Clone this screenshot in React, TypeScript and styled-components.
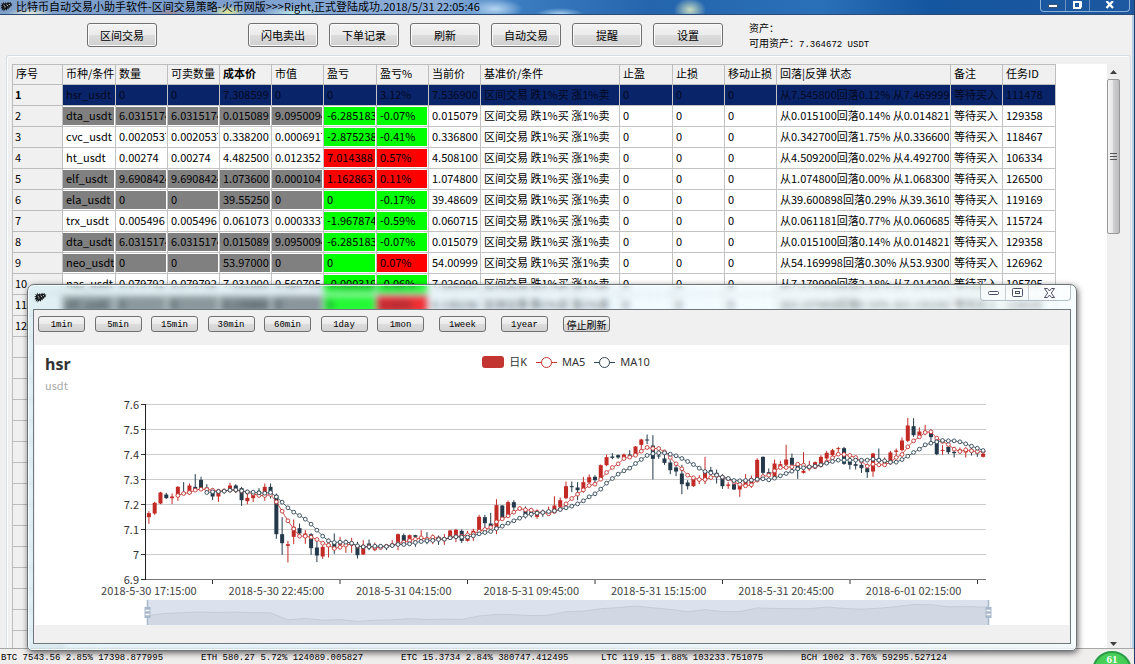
import React from "react";
import styled, { createGlobalStyle } from "styled-components";

const GlobalStyle = createGlobalStyle`
  * { box-sizing: border-box; }
  html, body { margin: 0; padding: 0; overflow: hidden; }
  body, button {
    font-family: "Noto Sans CJK SC", "Noto Sans", sans-serif;
    font-size: 11px;
    color: #000;
  }
`;

const mono = `"Liberation Mono", "Noto Sans CJK SC", monospace`;

/* ---------- main window ---------- */

const MainWindow = styled.div`
  position: relative;
  display: flex;
  flex-direction: column;
  height: 100vh;
  overflow: hidden;
  background: #f0f0f0;
  border-right: 1px solid #1c3c66;
  box-shadow: inset -2px 0 0 #b6cfe8;
`;

const TitleBar = styled.header`
  display: flex;
  align-items: flex-start;
  justify-content: space-between;
  flex: none;
  height: 15px;
  padding-right: 4px;
  border-bottom: 1px solid #2c4a73;
  background:
    radial-gradient(ellipse 16px 12px at 690px 10px, #c9dcc0, transparent),
    radial-gradient(ellipse 28px 10px at 495px 9px, #b5d6f2, transparent),
    radial-gradient(ellipse 24px 6px at 560px 14px, #a4cdec, transparent),
    radial-gradient(ellipse 24px 6px at 30px 14px, #eef3da, transparent),
    radial-gradient(ellipse 14px 6px at 170px 14px, #a28791, transparent),
    radial-gradient(ellipse 18px 7px at 228px 12px, #e2ec9c, transparent),
    radial-gradient(ellipse 32px 8px at 295px 14px, #c3eeea, transparent),
    linear-gradient(90deg, #7fa0cb 0, #7d9fce 250px, #8db0da 440px, #3b7cc0 520px, #2465ad 650px, #2a70b8 820px, #14569f 930px, #1d58a0 100%);
`;

const TitleText = styled.h1`
  display: flex;
  gap: 3px;
  margin: 0;
  font-size: 11px;
  font-weight: 400;
  line-height: 12px;
  white-space: nowrap;
`;

const WindowControls = styled.div`
  display: flex;
  height: 12px;
  border: 1px solid #8fb0d6;
  border-top: 0;
  border-radius: 0 0 4px 4px;
`;

const WindowControl = styled.button<{ $width: number }>`
  display: flex;
  align-items: center;
  justify-content: center;
  width: ${(p) => p.$width}px;
  padding: 0;
  border: 0;
  border-right: 1px solid #6d93c2;
  background: transparent;
  &:last-child { border-right: 0; }
`;

const Toolbar = styled.div`
  display: flex;
  align-items: center;
  flex: none;
  height: 40px;
  padding-left: 87px;
`;

const ToolGroup = styled.div`
  display: flex;
  gap: 11px;
  margin-left: 91px;
`;

const ToolButton = styled.button`
  width: 70px;
  height: 24px;
  padding: 0;
  border: 1px solid #707070;
  border-radius: 3px;
  background: linear-gradient(#f3f3f3, #ebebeb 50%, #dddddd 50%, #cfcfcf);
  box-shadow: inset 0 0 0 1px #fafafa;
  line-height: 20px;
`;

const Assets = styled.dl`
  margin: 2px 0 0 26px;
  font-size: 10px;
  line-height: 15px;
  div { display: flex; align-items: baseline; }
  dt, dd { margin: 0; white-space: nowrap; }
  dd { font-family: ${mono}; font-size: 9px; }
`;

const TablePanel = styled.main`
  display: flex;
  flex: 1;
  min-height: 0;
  margin: 0 3px 0 6px;
  padding: 8px 10px 0 5px;
  border: 1px solid #d5dfe5;
  border-bottom: 0;
  border-radius: 3px 3px 0 0;
  box-shadow: inset 1px 1px 0 #fff;
`;

const TableViewport = styled.div`
  flex: 1;
  min-width: 0;
  overflow: hidden;
  background: #fff;
`;

const TaskTable = styled.table`
  width: 1044px;
  table-layout: fixed;
  border-collapse: separate;
  border-spacing: 0;
  border-top: 1px solid #bdbdbd;
  border-left: 1px solid #bdbdbd;
`;

const HeadCell = styled.th<{ $strong?: boolean }>`
  height: 20px;
  padding: 0 0 2px 3px;
  overflow: hidden;
  border-right: 1px solid #bdbdbd;
  border-bottom: 1px solid #bdbdbd;
  background: #f0f0f0;
  font-weight: ${(p) => (p.$strong ? 700 : 400)};
  line-height: 17px;
  text-align: left;
  white-space: nowrap;
`;

const RowNumber = styled.th<{ $current?: boolean }>`
  height: 21px;
  padding: 0 0 2px 2px;
  border-right: 1px solid #bdbdbd;
  border-bottom: 1px solid #bdbdbd;
  background: #f0f0f0;
  font-weight: ${(p) => (p.$current ? 700 : 400)};
  line-height: 18px;
  text-align: left;
`;

const fills = {
  none: "#ffffff",
  gray: "#808080",
  up: "#ff0000",
  down: "#00ff00",
  selected: "#0a246a",
};
type Fill = keyof typeof fills;

const Cell = styled.td<{ $fill: Fill }>`
  height: 21px;
  padding: 1px 1px 1px 0;
  border-right: 1px solid #c3c3c3;
  border-bottom: 1px solid #c3c3c3;
  background: ${(p) => (p.$fill === "selected" ? fills.selected : "#fff")};
  color: ${(p) => (p.$fill === "selected" ? "#02081c" : "#000")};
`;

const CellText = styled.div<{ $fill: Fill }>`
  height: 18px;
  padding-left: 3px;
  overflow: hidden;
  background: ${(p) => fills[p.$fill]};
  line-height: 17px;
  white-space: nowrap;
`;

const ScrollTrack = styled.div`
  display: flex;
  flex-direction: column;
  flex: none;
  width: 13px;
  background: #efefef;
`;

const ScrollArrow = styled.button`
  display: flex;
  align-items: center;
  justify-content: center;
  height: 15px;
  padding: 0;
  border: 0;
  background: transparent;
  &:last-child { height: 9px; margin-top: auto; }
`;

const ScrollThumb = styled.div`
  display: flex;
  align-items: center;
  justify-content: center;
  height: 155px;
  border: 1px solid #979797;
  border-radius: 2px;
  background: linear-gradient(90deg, #f5f5f5, #e6e6e8 45%, #cfcfd2 50%, #bcbcc0);
`;

const StatusBar = styled.footer`
  display: grid;
  grid-template-columns: repeat(5, 200px);
  flex: none;
  height: 16px;
  padding-left: 1px;
  border-top: 1px solid #a7a7a7;
  background: #f0eded;
  font-family: ${mono};
  font-size: 9px;
  line-height: 18px;
  white-space: nowrap;
`;

const SpeedBall = styled.div`
  position: absolute;
  right: 2px;
  bottom: -27px;
  width: 40px;
  height: 40px;
  padding-top: 1px;
  border: 2px solid #2c9a46;
  border-radius: 50%;
  background: radial-gradient(circle at 50% 30%, #4fd85f, #31bd4c);
  box-shadow: 0 0 0 1px #e9f5ea;
  color: #fff;
  font-family: "Liberation Serif", serif;
  font-size: 11px;
  font-weight: 700;
  line-height: 11px;
  text-align: center;
`;

/* ---------- chart window ---------- */

const ChartWindow = styled.section`
  position: absolute;
  top: 284px;
  right: 57px;
  left: 27px;
  padding: 0 5px 6px 5px;
  border: 1px solid #6b7478;
  border-radius: 7px 7px 5px 5px;
  background: linear-gradient(90deg, rgba(175, 240, 255, 0.25), rgba(170, 225, 255, 0.2) 35%, rgba(240, 252, 255, 0.5));
  backdrop-filter: blur(3px);
  box-shadow: inset 0 0 0 1px rgba(255, 255, 255, 0.8), 1px 2px 6px rgba(0, 0, 0, 0.6);
`;

const ChartTitleBar = styled.header`
  display: flex;
  justify-content: space-between;
  align-items: flex-start;
  height: 24px;
  & > svg { margin: 6px 0 0 1px; }
`;

const ChartControls = styled.div`
  display: flex;
  height: 16px;
  border: 1px solid #b2bfc6;
  border-top: 0;
  border-radius: 0 0 4px 4px;
  background: rgba(255, 255, 255, 0.6);
`;

const ChartControl = styled(WindowControl)`
  border-right-color: #c3cdd2;
`;

const ChartBody = styled.div`
  padding: 0 1px 18px;
  border: 1px solid #70777a;
  background: #f0f0f0;
`;

const PeriodBar = styled.div`
  display: flex;
  gap: 15px;
  align-items: center;
  height: 35px;
  padding: 0 3px 7px;
`;

const PeriodGroup = styled.div`
  display: flex;
  justify-content: space-between;
  width: 386px;
`;

const PeriodButton = styled.button<{ $chinese?: boolean }>`
  width: 47px;
  height: 16px;
  padding: ${(p) => (p.$chinese ? 0 : 2)}px 0 0;
  border: 1px solid #707070;
  border-radius: 3px;
  background: linear-gradient(#f3f3f3, #ebebeb 50%, #dddddd 50%, #d2d2d2);
  font-family: ${(p) => (p.$chinese ? `"Noto Sans CJK SC", sans-serif` : mono)};
  font-size: ${(p) => (p.$chinese ? 10 : 9)}px;
  line-height: 13px;
`;

const ChartPane = styled.div`
  height: 280px;
  background: #fff;
`;

const ChartHeader = styled.div`
  display: grid;
  grid-template-columns: minmax(0, 1fr) auto minmax(0, 1fr);
  height: 50px;
  padding: 8px 0 0 10px;
`;

const Symbol = styled.h2`
  margin: 0;
  color: #333;
  font-family: "Noto Sans", sans-serif;
  font-size: 16px;
  font-weight: 700;
  line-height: 22px;
`;

const Quote = styled.p`
  margin: 0;
  color: #aaa;
  font-size: 11px;
  line-height: 20px;
`;

const Legend = styled.ul`
  display: flex;
  gap: 9px;
  margin: 0 0 0 18px;
  padding: 0;
  color: #333;
  font-family: "Noto Sans", "Noto Sans CJK SC", sans-serif;
  line-height: 18px;
  list-style: none;
  li { display: flex; align-items: center; gap: 5px; height: 18px; }
`;

const Plot = styled.svg`
  display: block;
  width: 100%;
  height: 230px;
`;

/* ---------- data ---------- */

const columns: [string, number][] = [
  ["序号", 50], ["币种/条件", 53], ["数量", 52], ["可卖数量", 52], ["成本价", 52], ["市值", 52],
  ["盈亏", 53], ["盈亏%", 52], ["当前价", 52], ["基准价/条件", 139], ["止盈", 53], ["止损", 52],
  ["移动止损", 52], ["回落|反弹 状态", 174], ["备注", 52], ["任务ID", 53],
];

type Task = {
  coin: string; qty: string; cost: string; value: string; profit: string; rate: string;
  price: string; state: string; id: string; held?: boolean;
};

const tasks: Task[] = [
  { coin: "hsr_usdt", qty: "0", cost: "7.308599", value: "0", profit: "0", rate: "3.12%", price: "7.536900", state: "从7.545800回落0.12% 从7.469999", id: "111478" },
  { coin: "dta_usdt", qty: "6.0315174", cost: "0.015089", value: "9.0950094", profit: "-6.285183", rate: "-0.07%", price: "0.015079", state: "从0.015100回落0.14% 从0.014821", id: "129358", held: true },
  { coin: "cvc_usdt", qty: "0.0020537", cost: "0.338200", value: "0.0006917", profit: "-2.875238", rate: "-0.41%", price: "0.336800", state: "从0.342700回落1.75% 从0.336600", id: "118467" },
  { coin: "ht_usdt", qty: "0.00274", cost: "4.482500", value: "0.012352", profit: "7.014388", rate: "0.57%", price: "4.508100", state: "从4.509200回落0.02% 从4.492700", id: "106334" },
  { coin: "elf_usdt", qty: "9.6908424", cost: "1.073600", value: "0.000104", profit: "1.162863", rate: "0.11%", price: "1.074800", state: "从1.074800回落0.00% 从1.068300", id: "126500", held: true },
  { coin: "ela_usdt", qty: "0", cost: "39.55250", value: "0", profit: "0", rate: "-0.17%", price: "39.48609", state: "从39.600898回落0.29% 从39.36100", id: "119169", held: true },
  { coin: "trx_usdt", qty: "0.005496", cost: "0.061073", value: "0.0003337", profit: "-1.967874", rate: "-0.59%", price: "0.060715", state: "从0.061181回落0.77% 从0.060685", id: "115724" },
  { coin: "dta_usdt", qty: "6.0315174", cost: "0.015089", value: "9.0950094", profit: "-6.285183", rate: "-0.07%", price: "0.015079", state: "从0.015100回落0.14% 从0.014821", id: "129358", held: true },
  { coin: "neo_usdt", qty: "0", cost: "53.97000", value: "0", profit: "0", rate: "0.07%", price: "54.00999", state: "从54.169998回落0.30% 从53.93000", id: "126962", held: true },
  { coin: "nas_usdt", qty: "0.079792", cost: "7.031000", value: "0.560705", profit: "-0.000319", rate: "-0.06%", price: "7.026999", state: "从7.179999回落2.18% 从7.014200", id: "105705" },
  { coin: "elf_usdt", qty: "0", cost: "0.135800", value: "0", profit: "0", rate: "0.02%", price: "0.135236", state: "从0.137800回落0.33% 从0.135200", id: "128549", held: true },
];

const tickers = [
  "BTC 7543.56 2.85% 17398.877995",
  "ETH 580.27 5.72% 124089.005827",
  "ETC 15.3734 2.84% 380747.412495",
  "LTC 119.15 1.88% 103233.751075",
  "BCH 1002 3.76% 59295.527124",
];

/* One candle per 15 minutes: direction, high, body top, body bottom, low.
   Levels count down the price scale: 193 is 7.6 and 718 is 6.9. */
const candleText = `
r 513 519 531 551;r 485 488 520 524;r 455 457 490 492;d 458 463 474 476;r 460 469 474 492;
r 438 440 468 482;d 426 458 460 462;r 430 436 460 464;d 402 440 448 455;d 410 419 444 450;
d 432 442 450 456;d 445 456 469 480;r 448 455 469 485;d 448 452 455 460;r 428 436 448 456;
d 432 436 446 458;d 440 444 480 497;r 460 473 483 492;r 452 460 474 486;d 444 452 460 470;
r 430 440 468 482;d 430 440 462 475;d 460 464 582 596;d 531 582 609 644;r 602 612 617 667;
r 538 560 590 612;d 550 564 580 588;r 570 580 592 611;d 579 582 624 644;d 600 622 646 666;
r 616 620 649 656;r 595 612 620 652;d 580 608 628 641;r 590 606 614 628;r 598 608 616 638;
r 593 606 614 638;d 605 616 645 655;r 600 615 643 644;d 598 610 622 630;r 607 620 630 633;
d 612 616 624 628;d 612 618 622 630;r 600 612 618 622;r 580 582 612 630;d 580 585 612 618;
r 583 585 608 612;d 584 585 590 620;r 570 592 598 610;d 576 594 604 612;r 583 595 603 612;
d 586 590 598 614;r 582 596 600 614;r 569 571 594 598;r 566 569 586 606;d 568 572 602 608;
r 572 590 602 604;r 566 572 585 602;r 524 530 572 576;d 524 531 549 566;d 518 550 558 562;
r 477 495 566 582;d 495 496 534 540;r 481 486 526 530;d 480 486 502 520;r 498 504 510 512;
d 499 512 524 535;d 504 514 522 532;r 508 516 530 536;d 508 515 520 530;r 499 512 518 524;
r 468 496 510 516;r 472 480 500 505;r 424 438 474 477;d 424 438 441 456;d 426 442 450 480;
r 410 426 447 458;r 403 411 427 440;d 405 410 420 426;r 373 375 415 418;r 343 351 375 378;
d 339 349 353 357;d 343 345 352 356;r 340 343 354 358;d 330 343 347 350;r 318 319 346 348;
r 296 298 314 330;d 283 298 301 312;d 285 316 356 418;d 335 346 349 356;d 343 355 368 374;
d 360 367 390 402;d 370 382 394 408;d 374 400 432 462;d 420 427 438 448;r 410 416 438 440;
r 405 414 420 432;r 350 395 420 432;d 380 390 398 402;d 388 398 406 430;d 402 410 438 446;
r 426 433 437 446;d 428 432 448 450;r 430 436 448 470;r 402 420 436 440;r 406 415 430 443;
r 354 359 416 420;d 349 350 398 404;d 385 396 402 412;r 358 370 412 414;r 362 372 380 384;
r 314 358 374 382;d 340 353 374 378;d 368 372 390 416;r 336 392 398 400;r 362 376 382 392;
r 364 366 380 384;r 345 350 372 378;r 332 338 355 362;r 326 330 345 352;r 320 324 327 335;
d 320 324 371 374;d 345 364 374 388;d 350 372 377 388;d 362 374 384 398;d 370 384 396 413;
r 338 340 394 410;d 325 355 365 370;r 352 364 372 376;r 332 337 362 374;r 325 331 335 352;
r 292 301 330 334;r 233 256 302 306;d 234 258 285 290;r 262 274 286 290;r 254 272 280 285;
d 268 278 291 310;d 295 298 342 345;r 315 329 332 344;d 315 320 336 342;d 320 335 339 352;
r 322 328 335 340;r 322 330 337 352;d 320 328 336 346;d 325 333 340 350;r 335 341 350 352`;

const candles = candleText.trim().split(";").map((row) => {
  const [dir, ...levels] = row.trim().split(" ");
  const [high, top, bottom, low] = levels.map(Number);
  return { up: dir === "r", high, top, bottom, low };
});

const ma5 = [
  466, 460, 457, 450, 447, 448, 450, 453, 452, 450, 450, 453, 456, 461, 466, 466, 463, 485, 513, 542,
  566, 588, 588, 591, 598, 609, 615, 625, 621, 615, 611, 618, 620, 619, 622, 622, 618, 615, 610, 606,
  601, 597, 593, 597, 591, 596, 597, 592, 588, 588, 584, 581, 573, 568, 562, 545, 536, 527, 516, 505,
  509, 510, 516, 517, 521, 514, 507, 491, 475, 462, 449, 436, 432, 417, 397, 382, 371, 355, 351, 345,
  333, 322, 325, 325, 335, 352, 371, 386, 405, 413, 418, 418, 412, 406, 411, 416, 426, 433, 437, 434,
  420, 409, 405, 392, 382, 382, 380, 372, 375, 382, 380, 375, 366, 353, 342, 343, 346, 352, 363, 378,
  372, 374, 374, 366, 352, 343, 320, 302, 290, 277, 275, 294, 304, 313, 327, 334, 329, 332, 334, 334,
];

const ma10 = [
  457, 455, 454, 453, 450, 449, 452, 455, 456, 458, 459, 457, 470, 486, 503, 516, 526, 537, 552, 570,
  588, 602, 607, 606, 606, 609, 617, 620, 620, 618, 618, 619, 616, 613, 613, 611, 607, 604, 602, 601,
  598, 597, 593, 590, 591, 591, 587, 581, 577, 574, 565, 558, 549, 542, 534, 526, 522, 519, 517, 514,
  512, 508, 503, 498, 491, 482, 470, 461, 447, 429, 415, 402, 392, 384, 370, 358, 346, 340, 338, 338,
  342, 347, 355, 364, 373, 384, 394, 398, 405, 411, 415, 421, 422, 421, 420, 417, 416, 419, 414, 407,
  400, 393, 386, 383, 380, 378, 374, 369, 364, 360, 360, 360, 360, 360, 360, 357, 360, 362, 366, 366,
  358, 348, 337, 327, 314, 309, 305, 301, 302, 302, 305, 311, 318, 324, 331,
];

const timeLabels = [
  "2018-5-30 17:15:00", "2018-5-30 22:45:00", "2018-5-31 04:15:00", "2018-5-31 09:45:00",
  "2018-5-31 15:15:00", "2018-5-31 20:45:00", "2018-6-01 02:15:00",
];
const priceLabels = ["7.6", "7.5", "7.4", "7.3", "7.2", "7.1", "7", "6.9"];

const RED = "#c23531";
const NAVY = "#2f4554";
const LEFT = 111;
const WIDTH = 840;
const STEP = WIDTH / candles.length;
const xAt = (i: number) => LEFT + (i + 0.5) * STEP;
const yAt = (level: number) => 9.5 + (level - 193) / 3;

/* ---------- parts ---------- */

const HorseIcon = () => (
  <svg width="13" height="12" viewBox="0 0 13 12" aria-hidden="true">
    <path
      d="M1.200 2.800l2 1.200-.2-2.200 1.700 1.700 1.200-1.300.8 1.200 1.500-1.600.6 1.200 1.900-.9.1 1.300 1.700.3-1.300 1.300 1 .9-1.700.3-.7 1.500-1.300-.2.300 1.900-1.400-.9-.9 2.300-1.100-1.500-2 2.500.4-2.600-2.300 1.600.9-2.300L.3 8.300l1.700-1.900L.2 5.300l1.900-.4z"
      fill="#16191c"
    />
    <path d="M3.600 5.200l1.700 1.300M4.600 7.600l.8-.5M6.700 4.600l1.300 1.600M9 4l.9 1.200" stroke="#e8f4f6" strokeWidth=".8" />
  </svg>
);

const Candlesticks = () => (
  <g>
    {candles.map((c, i) => {
      const color = c.up ? "#c22a26" : "#24394a";
      const x = xAt(i);
      return (
        <g key={i}>
          <line x1={x} x2={x} y1={yAt(c.high)} y2={yAt(c.low)} stroke={color} />
          <rect x={x - 2} width={4} y={yAt(c.top)} height={Math.max(1, yAt(c.bottom) - yAt(c.top))} fill={color} />
        </g>
      );
    })}
  </g>
);

const Average = ({ levels, start, color }: { levels: number[]; start: number; color: string }) => {
  const points = levels.map((v, i) => [xAt(i + start), yAt(v)]);
  return (
    <g>
      <polyline points={points.map((p) => p.join(",")).join(" ")} fill="none" stroke={color} strokeOpacity={0.8} />
      {points.map(([x, y]) => (
        <circle key={x} cx={x} cy={y} r={1.9} fill="#fff" stroke={color} strokeWidth={0.9} />
      ))}
    </g>
  );
};

const ZoomSlider = () => {
  const line = candles
    .map((c, i) => [xAt(i), 213 + ((c.up ? c.top : c.bottom) - 360) * 0.047])
    .filter((_, i) => i % 3 === 0)
    .map((p) => p.join(","))
    .join(" ");
  return (
    <g>
      <rect x={113} y={205} width={841} height={25} fill="#dbe2ed" />
      <polygon points={`113,230 ${line} 954,212 954,230`} fill="#d1d8e3" />
      <polyline points={`${line} 954,212`} fill="none" stroke="#c0c8d3" strokeWidth={0.8} />
      {[112.5, 953.5].map((x) => (
        <g key={x}>
          <line x1={x} x2={x} y1={205} y2={230} stroke="#a7b7cc" strokeWidth={1.5} />
          <rect x={x - 3} y={212} width={6} height={11} fill="#a7b7cc" />
          <path d={`M${x - 2} 215.500h4M${x - 2} 219.500h4`} stroke="#fff" strokeWidth={1.4} />
        </g>
      ))}
    </g>
  );
};

const PriceChart = () => (
  <Plot viewBox="0 0 1034 230" preserveAspectRatio="xMinYMin meet" role="img" aria-label="hsr 日K">
    {priceLabels.map((label, i) => {
      const y = 9.5 + i * 25;
      return (
        <g key={label}>
          <line x1={LEFT} x2={LEFT + WIDTH} y1={y} y2={y} stroke={i === 7 ? "#777" : "#ccc"} />
          <line x1={106} x2={LEFT} y1={y} y2={y} stroke="#333" />
          <text x={104} y={y + 4} textAnchor="end" fontSize={11} fill="#333">{label}</text>
        </g>
      );
    })}
    <line x1={110.5} x2={110.5} y1={9} y2={185} stroke="#222" />
    {timeLabels.map((label, i) => (
      <g key={label}>
        <line x1={177.5 + i * 127.5} x2={177.5 + i * 127.5} y1={185} y2={189} stroke="#333" />
        <text x={xAt(i * 22)} y={200} textAnchor="middle" fontSize={11} fill="#444">{label}</text>
      </g>
    ))}
    <Candlesticks />
    <Average levels={ma5} start={5} color={RED} />
    <Average levels={ma10} start={10} color={NAVY} />
    <ZoomSlider />
  </Plot>
);

const LineKey = ({ color }: { color: string }) => (
  <svg width="21" height="12" viewBox="0 0 21 12" aria-hidden="true">
    <path d="M0 6.500h21" stroke={color} />
    <circle cx="10.5" cy="6.5" r="5" fill="#fff" stroke={color} />
  </svg>
);

const TaskRow = ({ task, index }: { task: Task; index: number }) => {
  const selected = index === 0;
  const base: Fill = selected ? "selected" : task.held ? "gray" : "none";
  const plain: Fill = selected ? "selected" : "none";
  const trend = (text: string): Fill =>
    selected ? "selected" : text === "0" || text.startsWith("-") ? "down" : "up";
  const cells: [string, Fill][] = [
    [task.coin, base], [task.qty, base], [task.qty, base], [task.cost, base], [task.value, base],
    [task.profit, trend(task.profit)], [task.rate, trend(task.rate)], [task.price, plain],
    ["区间交易 跌1%买 涨1%卖", plain], ["0", plain], ["0", plain], ["0", plain],
    [task.state, plain], ["等待买入", plain], [task.id, plain],
  ];
  return (
    <tr>
      <RowNumber scope="row" $current={selected}>{index + 1}</RowNumber>
      {cells.map(([text, fill], i) => (
        <Cell key={i} $fill={fill}>
          <CellText $fill={fill}>{text}</CellText>
        </Cell>
      ))}
    </tr>
  );
};

const emptyRows = Array.from({ length: 16 }, (_, i) => i);

export default function App() {
  return (
    <>
      <GlobalStyle />
      <MainWindow>
        <TitleBar>
          <TitleText>
            <HorseIcon />
            比特币自动交易小助手软件-区间交易策略-火币网版&gt;&gt;&gt;Right,正式登陆成功.2018/5/31 22:05:46
          </TitleText>
          <WindowControls>
            <WindowControl $width={25} aria-label="最小化">
              <svg width="10" height="10"><rect x=".5" y="3.5" width="9" height="3" fill="#fff" stroke="#3a5478" /></svg>
            </WindowControl>
            <WindowControl $width={24} aria-label="还原">
              <svg width="11" height="10">
                <path d="M4 .5h5.500v6" fill="none" stroke="#fff" />
                <rect x="2" y="1" width="6" height="6" fill="none" stroke="#fff" strokeWidth="2" />
              </svg>
            </WindowControl>
            <WindowControl $width={39} aria-label="关闭">
              <svg width="10" height="10"><path d="M1.500 0l6.500 7M8 0L1.500 7" stroke="#fff" strokeWidth="2.200" /></svg>
            </WindowControl>
          </WindowControls>
        </TitleBar>

        <Toolbar>
          <ToolButton>区间交易</ToolButton>
          <ToolGroup>
            {["闪电卖出", "下单记录", "刷新", "自动交易", "提醒", "设置"].map((label) => (
              <ToolButton key={label}>{label}</ToolButton>
            ))}
          </ToolGroup>
          <Assets>
            <div><dt>资产：</dt></div>
            <div><dt>可用资产：</dt><dd>7.364672 USDT</dd></div>
          </Assets>
        </Toolbar>

        <TablePanel>
          <TableViewport>
            <TaskTable>
              <colgroup>
                {columns.map(([name, width]) => <col key={name} width={width} />)}
              </colgroup>
              <thead>
                <tr>
                  {columns.map(([name]) => (
                    <HeadCell key={name} scope="col" $strong={name === "成本价"}>{name}</HeadCell>
                  ))}
                </tr>
              </thead>
              <tbody>
                {tasks.map((task, i) => <TaskRow key={i} task={task} index={i} />)}
                {emptyRows.map((i) => (
                  <tr key={i}>
                    <RowNumber scope="row">{i === 0 ? "12" : ""}</RowNumber>
                    <td colSpan={15} />
                  </tr>
                ))}
              </tbody>
            </TaskTable>
          </TableViewport>
          <ScrollTrack>
            <ScrollArrow aria-label="向上滚动">
              <svg width="7" height="4"><path d="M0 4l3.500-4L7 4z" fill="#404040" /></svg>
            </ScrollArrow>
            <ScrollThumb>
              <svg width="7" height="8"><path d="M0 .5h7M0 3.500h7M0 6.500h7" stroke="#555" /></svg>
            </ScrollThumb>
            <ScrollArrow aria-label="向下滚动">
              <svg width="7" height="4"><path d="M0 0l3.500 4L7 0z" fill="#404040" /></svg>
            </ScrollArrow>
          </ScrollTrack>
        </TablePanel>

        <StatusBar>
          {tickers.map((text) => <span key={text}>{text}</span>)}
        </StatusBar>
        <SpeedBall>61</SpeedBall>

        <ChartWindow>
          <ChartTitleBar>
            <HorseIcon />
            <ChartControls>
              <ChartControl $width={25} aria-label="最小化">
                <svg width="11" height="6"><rect x=".5" y="1.5" width="10" height="3" rx="1" fill="#fff" stroke="#4a4f66" /></svg>
              </ChartControl>
              <ChartControl $width={23} aria-label="最大化">
                <svg width="11" height="9">
                  <rect x=".5" y=".5" width="10" height="8" rx="1" fill="#fff" stroke="#4a4f66" />
                  <rect x="3.5" y="3.5" width="4" height="2" fill="#fff" stroke="#4a4f66" />
                </svg>
              </ChartControl>
              <ChartControl $width={41} aria-label="关闭">
                <svg width="11" height="10" viewBox="0 0 11 10">
                  <path d="M.5.5h3l2 2.500 2-2.500h3L7.300 5l3.200 4.500h-3l-2-2.500-2 2.500h-3L3.700 5z" fill="#fff" stroke="#4a4f66" />
                </svg>
              </ChartControl>
            </ChartControls>
          </ChartTitleBar>
          <ChartBody>
            <PeriodBar>
              <PeriodGroup>
                {["1min", "5min", "15min", "30min", "60min", "1day", "1mon"].map((label) => (
                  <PeriodButton key={label}>{label}</PeriodButton>
                ))}
              </PeriodGroup>
              <PeriodButton>1week</PeriodButton>
              <PeriodButton>1year</PeriodButton>
              <PeriodButton $chinese>停止刷新</PeriodButton>
            </PeriodBar>
            <ChartPane>
              <ChartHeader>
                <div>
                  <Symbol>hsr</Symbol>
                  <Quote>usdt</Quote>
                </div>
                <Legend>
                  <li>
                    <svg width="22" height="12" aria-hidden="true"><rect width="22" height="12" rx="3" fill={RED} /></svg>
                    日K
                  </li>
                  <li><LineKey color={RED} />MA5</li>
                  <li><LineKey color={NAVY} />MA10</li>
                </Legend>
              </ChartHeader>
              <PriceChart />
            </ChartPane>
          </ChartBody>
        </ChartWindow>
      </MainWindow>
    </>
  );
}
